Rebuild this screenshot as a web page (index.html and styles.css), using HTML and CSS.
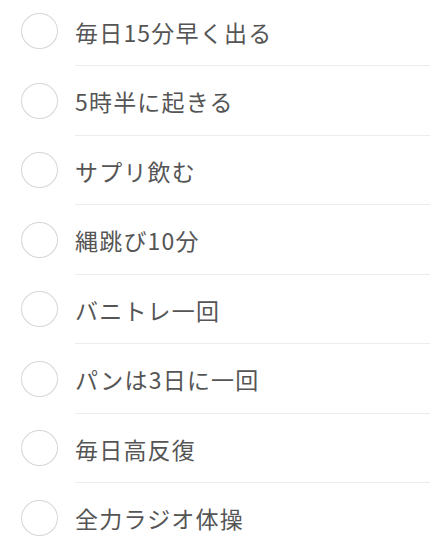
FILE: index.html
```html
<!DOCTYPE html>
<html lang="ja">
<head>
<meta charset="utf-8">
<link rel="stylesheet" href="styles.css">
</head>
<body>
<ul class="list">
  <li class="row"><span class="check"></span><span class="label">毎日15分早く出る</span></li>
  <li class="row"><span class="check"></span><span class="label">5時半に起きる</span></li>
  <li class="row"><span class="check"></span><span class="label">サプリ飲む</span></li>
  <li class="row"><span class="check"></span><span class="label">縄跳び10分</span></li>
  <li class="row"><span class="check"></span><span class="label">バニトレ一回</span></li>
  <li class="row"><span class="check"></span><span class="label">パンは3日に一回</span></li>
  <li class="row"><span class="check"></span><span class="label">毎日高反復</span></li>
  <li class="row"><span class="check"></span><span class="label">全力ラジオ体操</span></li>
</ul>
</body>
</html>
```
FILE: styles.css
```css
html, body {
  margin: 0;
  padding: 0;
  background: #ffffff;
  overflow: hidden;
}
.list {
  list-style: none;
  margin: -3.5px 0 0 0;
  padding: 0;
  font-family: "Noto Sans CJK JP", "Noto Sans", sans-serif;
}
.row {
  display: flex;
  align-items: center;
  height: 69.5px;
}
.check {
  flex: none;
  width: 37px;
  height: 36px;
  margin-left: 21px;
  border: 1.5px solid #d6d6d6;
  border-radius: 50%;
  box-sizing: border-box;
}
.label {
  flex: 1;
  align-self: stretch;
  display: flex;
  align-items: center;
  margin-left: 17px;
  padding-top: 2px;
  border-bottom: 1.5px solid #ececec;
  font-size: 23px;
  font-weight: 400;
  color: #555555;
  letter-spacing: 1.2px;
}
```
